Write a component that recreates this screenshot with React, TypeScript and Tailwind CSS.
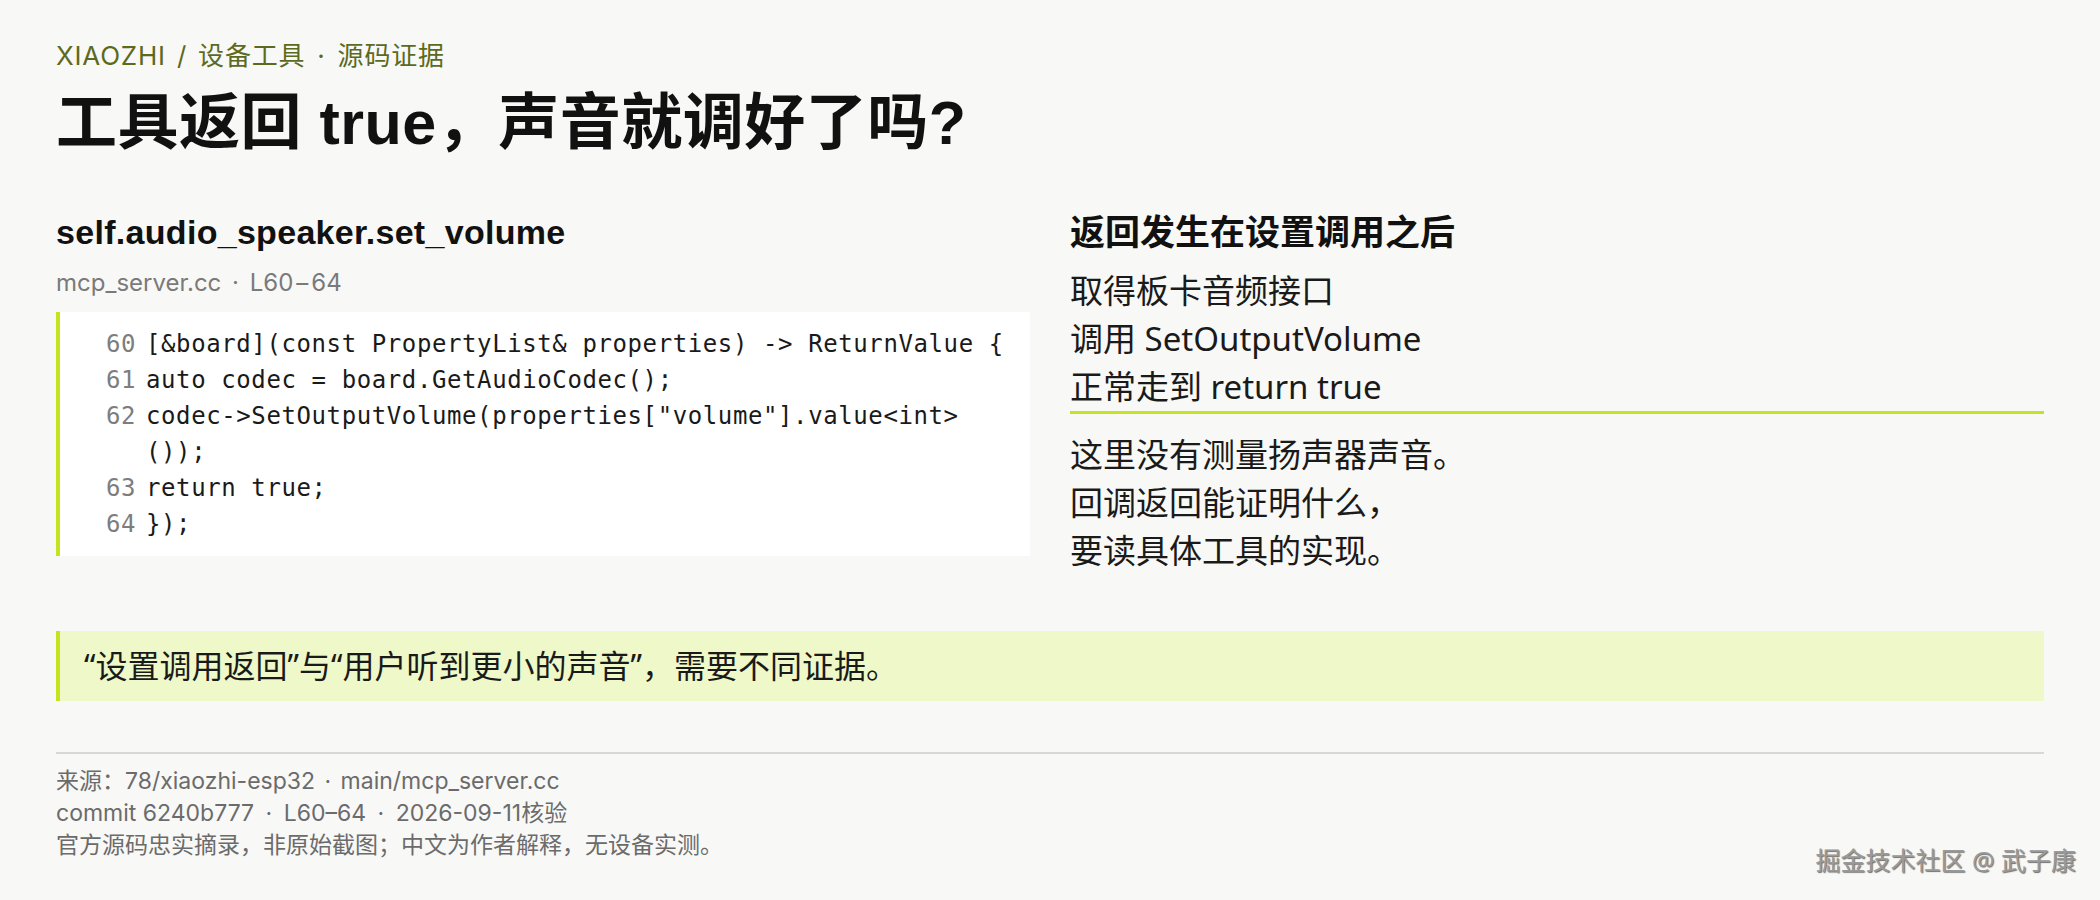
import React from "react";

const codeLines: { n: string; parts: string[] }[] = [
  { n: "60", parts: ["[&board](const PropertyList& properties) -> ReturnValue {"] },
  { n: "61", parts: ["auto codec = board.GetAudioCodec();"] },
  { n: "62", parts: ['codec->SetOutputVolume(properties["volume"].value<int>', "());"] },
  { n: "63", parts: ["return true;"] },
  { n: "64", parts: ["});"] },
];

function Dot({ m }: { m: string }) {
  return <span className={m}>·</span>;
}

export default function App() {
  return (
    <div className="relative min-h-[900px] w-full overflow-hidden bg-[#f8f8f6] px-14 pt-[39px] font-['Noto_Sans','Noto_Sans_CJK_SC',sans-serif] text-[#141414]">
      <div className="font-['Inter','Noto_Sans_CJK_SC',sans-serif] text-[26px] leading-[34px] tracking-[0.8px] text-[#5c6a1f]">
        XIAOZHI<span className="mx-[11px]">/</span>设备工具<span className="mx-[12px]">·</span>源码证据
      </div>
      <h1 className="mt-[14px] font-['Liberation_Sans','Noto_Sans_CJK_SC',sans-serif] text-[61px] font-bold leading-[72px] tracking-[0.5px] text-[#111]">
        工具返回 true，声音就调好了吗?
      </h1>

      <div className="mt-[52px] grid grid-cols-2 gap-10">
        <div>
          <h2 className="font-['Liberation_Sans','Noto_Sans_CJK_SC',sans-serif] text-[34px] font-bold leading-[42px] tracking-[0.3px] text-[#111]">
            self.audio_speaker.set_volume
          </h2>
          <div className="mt-[14px] font-['Inter','Noto_Sans_CJK_SC',sans-serif] text-[24px] leading-[32px] text-[#7a7a7a]">
            mcp_server.cc <Dot m="mx-[4px]" /> L60<span className="mx-[3px]">–</span>64
          </div>
          <div className="mt-[13px] border-l-4 border-[#c6e31f] bg-white py-[14px] pl-[46px] pr-5 font-['DejaVu_Sans_Mono',monospace] text-[24px] leading-[36px] tracking-[0.6px]">
            {codeLines.map((l) => (
              <div key={l.n} className="flex gap-[10px]">
                <span className="w-[30px] shrink-0 text-[#7d7d7d]">{l.n}</span>
                <div className="whitespace-pre text-[#1a1a1a]">
                  {l.parts.map((p, i) => (
                    <div key={i}>{p}</div>
                  ))}
                </div>
              </div>
            ))}
          </div>
        </div>

        <div>
          <h2 className="text-[35px] font-bold leading-[42px] text-[#111]">返回发生在设置调用之后</h2>
          <div className="mt-[14px] border-b-[3px] border-[#c6e31f] text-[33px] leading-[48px] text-[#1a1a1a]">
            <div>取得板卡音频接口</div>
            <div>调用 SetOutputVolume</div>
            <div>正常走到 return true</div>
          </div>
          <div className="mt-[17px] text-[33px] leading-[48px] text-[#1a1a1a]">
            <div>这里没有测量扬声器声音。</div>
            <div>回调返回能证明什么，</div>
            <div>要读具体工具的实现。</div>
          </div>
        </div>
      </div>

      <div className="mt-[56px] flex h-[70px] items-center border-l-4 border-[#c6e31f] bg-[#eef8c8] pl-6 text-[32px] text-[#1a1a1a]">
        “设置调用返回”与“用户听到更小的声音”，需要不同证据。
      </div>

      <div className="mt-[51px] h-[2px] bg-[#d8d8d8]" />

      <div className="mt-[11px] font-['Inter','Noto_Sans_CJK_SC',sans-serif] text-[23px] leading-[32px] text-[#6b6b6b]">
        <div>
          来源：78/xiaozhi-esp32 <Dot m="mx-[3px]" /> main/mcp_server.cc
        </div>
        <div>
          commit 6240b777 <Dot m="mx-[5px]" /> L60–64 <Dot m="mx-[5px]" /> 2026-09-11核验
        </div>
        <div>官方源码忠实摘录，非原始截图；中文为作者解释，无设备实测。</div>
      </div>

      <div className="absolute bottom-[22px] right-[24px] text-[25px] leading-[36px] text-[#9a9a9a] [text-shadow:1px_1px_1px_rgba(0,0,0,0.55)]">
        掘金技术社区 @ 武子康
      </div>
    </div>
  );
}
